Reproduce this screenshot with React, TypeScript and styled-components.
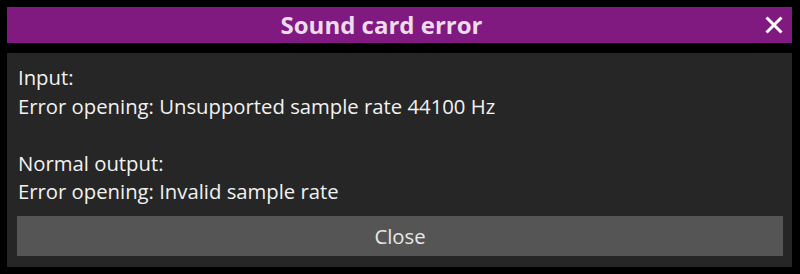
import React from "react";
import styled, { createGlobalStyle } from "styled-components";

const Global = createGlobalStyle`
  html, body { margin: 0; padding: 0; background: #000; }
  body { font-family: "Open Sans", "Noto Sans", sans-serif; }
`;

const Window = styled.div`
  width: 800px;
  height: 274px;
  box-sizing: border-box;
  padding: 7px 8px 7px 7px;
  display: flex;
  flex-direction: column;
  gap: 10px;
  background: #000;
`;

const TitleBar = styled.div`
  height: 36px;
  display: flex;
  align-items: center;
  background: #801a80;
`;

const Title = styled.div`
  flex: 1;
  text-align: center;
  font-size: 24px;
  font-weight: 700;
  color: #ecdcec;
  line-height: 36px;
`;

const CloseIcon = styled.button`
  width: 36px;
  height: 36px;
  border: 0;
  padding: 0;
  background: transparent;
  display: flex;
  align-items: center;
  justify-content: center;
  cursor: pointer;
`;

const Panel = styled.div`
  flex: 1;
  background: #262626;
  padding: 10px 9px 10px 10px;
  display: flex;
  flex-direction: column;
  gap: 10px;
`;

const Message = styled.div`
  font-size: 20.3px;
  line-height: 28.6px;
  color: #f2f2f2;
  padding-left: 1px;
  white-space: pre;
`;

const Line = styled.div`
  height: 28.6px;
`;

const Button = styled.button`
  height: 40px;
  border: 0;
  background: #555555;
  color: #e8e8e8;
  font-family: "Open Sans", "Noto Sans", sans-serif;
  font-size: 20.3px;
  cursor: pointer;
`;

const lines = [
  "Input:",
  "Error opening: Unsupported sample rate 44100 Hz",
  "",
  "Normal output:",
  "Error opening: Invalid sample rate",
];

export default function App() {
  return (
    <>
      <Global />
      <Window>
        <TitleBar>
          <Title>Sound card error</Title>
          <CloseIcon aria-label="Close">
            <svg width="18" height="18" viewBox="0 0 18 18">
              <path d="M1.5 1.5 L16.5 16.5 M16.5 1.5 L1.5 16.5" stroke="#fff" strokeWidth="3" />
            </svg>
          </CloseIcon>
        </TitleBar>
        <Panel>
          <Message>
            {lines.map((l, i) => (
              <Line key={i}>{l}</Line>
            ))}
          </Message>
          <Button>Close</Button>
        </Panel>
      </Window>
    </>
  );
}
